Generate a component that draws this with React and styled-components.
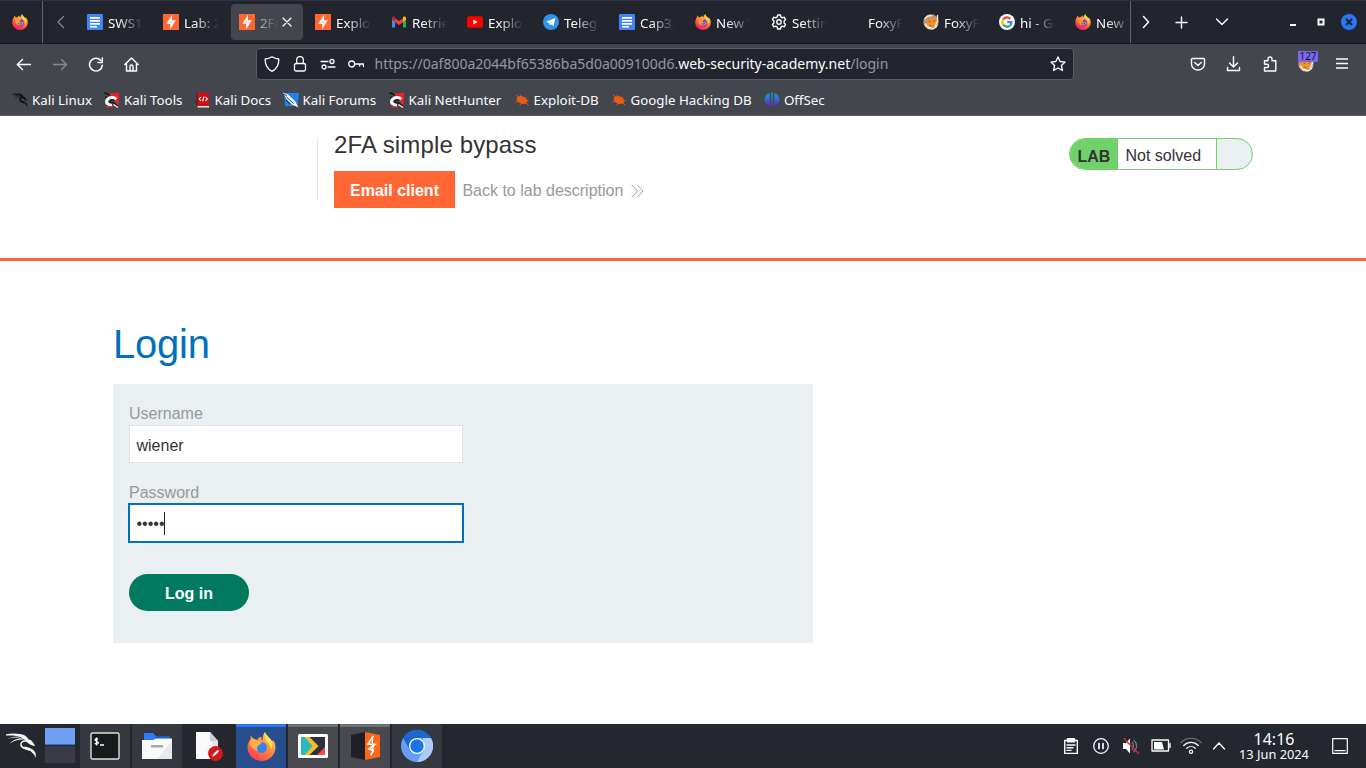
import React from "react";
import styled, { createGlobalStyle } from "styled-components";

const UI = `"Noto Sans", "Open Sans", sans-serif`;
const PAGE = `"Liberation Sans", Arial, sans-serif`;

const Global = createGlobalStyle`
  * { box-sizing: border-box; }
  html, body { margin: 0; padding: 0; overflow: hidden; }
  svg { display: block; flex: none; }
`;

const Screen = styled.div`
  width: 1366px;
  height: 768px;
  display: flex;
  flex-direction: column;
  background: #fff;
  font-family: ${UI};
`;

/* ---------- Browser chrome ---------- */
const TabBar = styled.div`
  height: 44px;
  display: flex;
  background: #23252e;
  border-top: 1px solid #2e3045;
  border-bottom: 1px solid #17181f;
  color: #fcfcfc;
`;
const Pinned = styled.div`
  width: 43px;
  padding: 13px 0 0 12px;
  border-right: 1px solid #62646b;
`;
const ScrollLeft = styled.div`
  width: 34px;
  padding: 13px 0 0 14px;
`;
const Tabs = styled.div`
  width: 1054px;
  display: flex;
  overflow: hidden;
  border-right: 1px solid #62646b;
`;
const Tab = styled.div`
  flex: none;
  width: 72px;
  height: 36px;
  margin: 3px 2px 0;
  padding: 0 8px;
  display: flex;
  align-items: center;
  border-radius: 4px;
  background: ${(p) => (p.$active ? "#44464e" : "transparent")};
`;
const Favicon = styled.div`
  width: 16px;
  height: 16px;
  flex: none;
  margin-right: 5px;
`;
const TabTitle = styled.div`
  width: ${(p) => (p.$short ? 19 : 35)}px;
  flex: none;
  overflow: hidden;
  white-space: nowrap;
  font-size: 13.33px;
  line-height: 20px;
  padding-top: 1px;
  mask-image: linear-gradient(to right, rgba(0, 0, 0, ${(p) => (p.$short ? 0.6 : 1)}) ${(p) => (p.$short ? 0 : 10)}px, transparent);
`;
const StripButtons = styled.div`
  display: flex;
  flex: 1;
  align-items: center;
  padding: 0 9px 0 9px;
`;
const StripButton = styled.div`
  width: ${(p) => p.$w}px;
  flex: none;
`;
const WindowButtons = styled.div`
  margin-left: auto;
  display: flex;
  gap: 12px;
`;
const NavBar = styled.div`
  height: 40px;
  display: flex;
  align-items: center;
  background: #44464e;
  padding: 0 16px;
`;
const NavButtons = styled.div`
  width: 240px;
  display: flex;
  gap: 20px;
`;
const UrlBar = styled.div`
  width: 818px;
  height: 32px;
  display: flex;
  align-items: center;
  background: #23252e;
  border: 1px solid #5b5d66;
  border-radius: 4px;
  padding: 0 7px;
`;
const UrlIcons = styled.div`
  display: flex;
  gap: 12px;
  margin-right: 10px;
`;
const Url = styled.div`
  flex: 1;
  font-size: 14px;
  line-height: 20px;
  padding-left: 0.5px;
  white-space: nowrap;
  color: #96979d;
  b { color: #fcfcfc; font-weight: 400; }
`;
const Extensions = styled.div`
  margin-left: auto;
  display: flex;
  gap: 20px;
`;
const ExtensionIcon = styled.div`
  position: relative;
  width: 16px;
  height: 16px;
`;
const Badge = styled.div`
  position: absolute;
  left: 0;
  top: -5px;
  width: 20px;
  height: 11px;
  border-radius: 1px;
  background: #7c66ef;
  color: #15141a;
  font-size: 10px;
  line-height: 11px;
  text-align: center;
`;
const Bookmarks = styled.div`
  height: 32px;
  display: flex;
  align-items: center;
  gap: 12px;
  padding-left: 12px;
  background: #44464e;
  border-bottom: 1px solid #5b5d66;
  color: #fcfcfc;
`;
const Bookmark = styled.div`
  display: flex;
  align-items: center;
  gap: 4px;
  width: ${(p) => p.$w}px;
  font-size: 13.33px;
  line-height: 18px;
  white-space: nowrap;
`;

/* ---------- Page ---------- */
const Page = styled.main`
  height: 608px;
  font-family: ${PAGE};
  color: #333332;
`;
const LabHeader = styled.header`
  height: 145px;
  border-bottom: 3px solid #ff6633;
  display: flex;
  justify-content: space-between;
  padding: 22px 113px 0 317px;
`;
const LabInfo = styled.div`
  height: 62px;
  border-left: 1px solid #e3e3e3;
  padding-left: 16px;
`;
const LabTitle = styled.h2`
  margin: -7px 0 12px;
  font-size: 24px;
  line-height: 28px;
  font-weight: 400;
  letter-spacing: 0.15px;
`;
const LabLinks = styled.div`
  display: flex;
  align-items: center;
  font-size: 16px;
`;
const EmailButton = styled.a`
  width: 121px;
  height: 37px;
  padding-top: 1px;
  background: #ff6633;
  color: #fff;
  font-weight: 700;
  line-height: 37px;
  text-align: center;
`;
const BackLink = styled.a`
  display: flex;
  align-items: center;
  gap: 8px;
  padding: 2px 0 0 7.4px;
  color: #999;
`;
const LabStatus = styled.div`
  width: 184px;
  height: 32px;
  display: flex;
  overflow: hidden;
  border: 1px solid #71d26c;
  border-radius: 16px;
  background: #eaeff2;
  font-size: 16px;
  line-height: 34px;
`;
const LabTag = styled.div`
  width: 48px;
  padding-left: 7.5px;
  line-height: 36px;
  background: #71d26c;
  font-weight: 700;
`;
const LabState = styled.div`
  width: 99px;
  padding-left: 7.5px;
  background: #fff;
  border-right: 1px solid #71d26c;
`;
const LoginSection = styled.section`
  padding: 60px 0 0 113px;
`;
const Heading = styled.h1`
  margin: 0 0 17px;
  font-size: 40px;
  line-height: 46px;
  font-weight: 400;
  letter-spacing: -0.25px;
  color: #0071bd;
`;
const LoginForm = styled.form`
  width: 700px;
  height: 259px;
  padding: 20px 16px 0;
  background: #eaeff2;
  font-size: 16px;
`;
const Label = styled.label`
  display: block;
  height: 21px;
  line-height: 20px;
  color: #999;
`;
const Field = styled.div`
  width: 334px;
  height: 38px;
  margin-bottom: ${(p) => p.$gap}px;
  display: flex;
  align-items: center;
  padding: ${(p) => (p.$focus ? 2 : 4)}px 0 0 6.5px;
  background: #fff;
  border: 1px solid ${(p) => (p.$focus ? "#0071bd" : "#e3e3e3")};
  box-shadow: ${(p) => (p.$focus ? "0 0 0 1px #0071bd" : "none")};
`;
const Caret = styled.span`
  width: 1px;
  height: 23px;
  margin: -1px 0 0 -0.8px;
  background: #222;
`;
const LoginButton = styled.button`
  display: block;
  width: 120px;
  height: 37px;
  border: 0;
  border-radius: 19px;
  padding: 2px 0 0;
  background: #00795f;
  color: #fff;
  font: 700 16px ${PAGE};
`;

/* ---------- Taskbar ---------- */
const Taskbar = styled.footer`
  height: 44px;
  display: flex;
  background: #25272f;
  color: #fcfcfc;
`;
const Launcher = styled.div`
  width: 45px;
  padding: 7px 0 0 5px;
`;
const Pager = styled.div`
  width: 30px;
  margin-right: 5px;
  padding-top: 4px;
  display: flex;
  flex-direction: column;
  gap: 1px;
`;
const Desktop = styled.div`
  height: 17px;
  background: ${(p) => (p.$current ? "#6e9ff2" : "#393b44")};
  border-bottom: ${(p) => (p.$current ? "1px solid #2f6fd8" : "0")};
`;
const Tasks = styled.div`
  display: flex;
  gap: 2px;
`;
const tones = { idle: "#36383f", none: "transparent", open: "#47494f", focused: "#284d8d" };
const edges = { idle: "transparent", none: "transparent", open: "#6b7173", focused: "#2a78f2" };
const Task = styled.div`
  width: 50px;
  height: 44px;
  display: flex;
  align-items: center;
  justify-content: center;
  background: ${(p) => tones[p.$tone]};
  box-shadow: inset 0 3px 0 ${(p) => edges[p.$tone]};
`;
const Tray = styled.div`
  margin-left: auto;
  display: flex;
  align-items: center;
`;
const TrayItem = styled.div`
  width: 30px;
  display: flex;
  justify-content: center;
`;
const Clock = styled.div`
  width: 78px;
  padding-right: 2px;
  display: flex;
  flex-direction: column;
  align-items: center;
  white-space: nowrap;
`;
const Time = styled.div`
  font-size: 16px;
  line-height: 16px;
`;
const DateText = styled.div`
  font-size: 12.8px;
  line-height: 14px;
`;
const ShowDesktop = styled.div`
  width: 52px;
  padding-left: 18px;
`;

/* ---------- Icons ---------- */
const Line = ({ size = 16, w = size, h = size, vb = "0 0 16 16", sw = 1.3, color = "#fcfcfc", children }) => (
  <svg width={w} height={h} viewBox={vb} fill="none" stroke={color} strokeWidth={sw} strokeLinecap="round" strokeLinejoin="round">
    {children}
  </svg>
);

const Firefox = ({ size = 16, id }) => (
  <svg width={size} height={size} viewBox="0 0 32 32">
    <defs>
      <linearGradient id={`ff${id}`} x1="0.8" y1="0" x2="0.3" y2="1">
        <stop offset="0" stopColor="#fff044" />
        <stop offset="0.35" stopColor="#ffa02d" />
        <stop offset="0.7" stopColor="#ff4f3d" />
        <stop offset="1" stopColor="#ee1470" />
      </linearGradient>
    </defs>
    <path fill={`url(#ff${id})`} d="M21 0c0 4 3 5 5 8l2-1c2 3 3.500 6 3.500 10C31.500 25.500 24.500 32 16 32S.5 25.500.5 17C.5 12 2 9 4 6l1-3 3 4 4-1c1.500-2 2-3 3-3 0 2 1 3 2 4 0-3 2-6 4-7z" />
    <circle cx="16.500" cy="17.500" r="7.500" fill="#6b45df" />
    <path fill="#ff9930" d="M4 9c4-2 7-1 9 1 2-1 5 0 6 2-2 0-4 1-4 3 2 3 6 2 7 0 2 3-1 8-6 8-6 0-9-3-9-7 0-3-1-5-3-7z" />
    <path fill="#6b45df" d="M12 17c3 3 7 2 9-1 0 4-3 6-6 5-2-.5-3-2-3-4z" />
    <path fill="#ffd33b" d="M22 4c5 4 7 10 5 16-1-5-3-8-6-10-1-3 0-5 1-6z" />
  </svg>
);

const TaskFirefox = () => (
  <svg width="29" height="29" viewBox="0 0 29 29">
    <defs>
      <linearGradient id="fft" x1="0.85" y1="0.05" x2="0.2" y2="1">
        <stop offset="0" stopColor="#ffd94a" />
        <stop offset="0.45" stopColor="#ff8a3c" />
        <stop offset="1" stopColor="#ff3850" />
      </linearGradient>
    </defs>
    <path fill="url(#fft)" d="M18 0c1 4 6 6 7 10l1-2c2 3 2.500 5 2.500 7.500C28.500 23 22 29 14.500 29S.5 23 .5 15.500c0-4 1-6 3-8l0-4 4 4 3 .2c1-2 2-3 4-3-.3 2 0 3 1 4 0-4 1-7 2.500-8.700z" />
    <circle cx="14.500" cy="15.500" r="5.500" fill="#3980ef" />
    <path fill="#ffad45" d="M3.500 7.500c2-1 5-1 7 1l4 2c0 2-3 2-4 4-1 1-1 3 1 5-4-1-6-5-8-5-1-2-.7-5 0-7z" />
    <path fill="#ffe25b" d="M18 0c1 4 6 6 7 10 1 3 0 6-1 8 0-5-3-7-5-10-1-3-2-5-1-8z" />
  </svg>
);

const Docs = () => (
  <svg width="16" height="16" viewBox="0 0 16 16">
    <rect width="16" height="16" rx="1" fill="#4285f4" />
    <path d="M3 3h10v1.700H3zM3 6h10v1.700H3zM3 9h10v1.700H3zM3 12h7v1.500H3z" fill="#fff" />
  </svg>
);
const Burp = () => (
  <svg width="16" height="16" viewBox="0 0 16 16">
    <rect width="16" height="16" fill="#ff6633" />
    <path d="M9 .8v5.400h3.800L7.200 15.200V9.800H3.200z" fill="#fff" />
    <path d="M6 7.300l2.500 0M7.700 8.800h2.500" stroke="#ff6633" strokeWidth=".5" fill="none" />
  </svg>
);
const Gmail = () => (
  <svg width="16" height="16" viewBox="0 0 16 16">
    <path d="M1 3.500v10h3V7z" fill="#4285f4" />
    <path d="M15 3.500v10h-3V7z" fill="#34a853" />
    <path d="M4 4.200v4L8 11l4-2.800v-4L8 7z" fill="#ea4335" />
    <path d="M1 5.500V4c0-1.500 1.600-2 2.500-1.200L4 3.200v4.500z" fill="#c5221f" />
    <path d="M15 5.500V4c0-1.500-1.600-2-2.500-1.200l-.5.400v4.500z" fill="#fbbc04" />
  </svg>
);
const YouTube = () => (
  <svg width="16" height="16" viewBox="0 0 16 16">
    <rect y="2.300" width="16" height="11.400" rx="2.500" fill="#f00" />
    <path d="m6.300 5.500 4.300 2.500-4.300 2.500z" fill="#fff" />
  </svg>
);
const Telegram = () => (
  <svg width="16" height="16" viewBox="0 0 16 16">
    <circle cx="8" cy="8" r="8" fill="#2f93e8" />
    <path d="M3 7.800 12.300 4l-1.600 8.200-2.600-1.900-1.300 1.300-.4-2.400z" fill="#fff" />
    <path d="m6.400 9.200 4-3.400-3.300 4z" fill="#a9d3f5" />
  </svg>
);
const Gear = () => (
  <Line sw={1.400}>
    <path d="m6.700 1-.5 2-1.400.8-2-.6L1.400 5.600 2.900 7v2l-1.500 1.400 1.400 2.400 2-.6 1.400.8.5 2h2.700l.5-2 1.300-.8 2 .6 1.400-2.400L13.100 9V7l1.500-1.400-1.400-2.400-2 .6L9.900 3l-.5-2z" />
    <circle cx="8" cy="8" r="2.200" />
  </Line>
);
const Fox = () => (
  <svg width="16" height="16" viewBox="0 0 16 16">
    <circle cx="8" cy="8" r="7.700" fill="#c09573" />
    <path d="M1 9c1 6 11 8 14 0l-1 4-4 2.500-5-.8z" fill="#fff3e6" />
    <path d="M4 5.500 9 5l3.500-2 1.200 4-2 4.500-4 1.200L3.500 11z" fill="#f59324" />
    <path d="m1.500 5 3.500-3 4-.3M14.500 1v6l-2.500 5.500M2.500 9.500l2 3.500 4 1" stroke="#efede9" strokeWidth="1.300" fill="none" />
    <path d="m5.500 7 2 .8M10 7.800 12 6M6.500 11.200l2 .3" stroke="#8a4a17" strokeWidth=".8" />
  </svg>
);
const Google = () => (
  <svg width="16" height="16" viewBox="0 0 16 16">
    <circle cx="8" cy="8" r="8" fill="#fff" />
    <g fill="none" strokeWidth="2.200">
      <path d="M4.200 5.500A4.500 4.500 0 0 1 11.300 4.900" stroke="#ea4335" />
      <path d="M4.200 5.500a4.500 4.500 0 0 0 0 5" stroke="#fbbc05" />
      <path d="M4.200 10.500a4.500 4.500 0 0 0 6.800 1" stroke="#34a853" />
      <path d="M11 11.500A4.500 4.500 0 0 0 12.500 8.200H8.200" stroke="#4285f4" />
    </g>
  </svg>
);

const Dragon = ({ size = 16, h = size, color = "#111216", bold = 1.5 }) => (
  <svg width={size} height={h} viewBox="0 0 32 28" preserveAspectRatio="none">
    <path fill={color} d="M1 3.200c5-1 10-1 15.500 0C20 4 22.500 6 23.500 8.200l3 1.300 3.500 4.800-1 .8-4-1.600-3.500-2.500C19 6.500 12 3.700 1 4.600z" />
    <path fill={color} d="M4.500 12.800c3.500-4 8-5.500 13-5.600l1.500 1.300C13 8.500 9 9.500 4.500 12.800z" />
    <path fill={color} d="M2.500 8c3-2 7-2.500 12-2.300v.9C10 6.500 6 6.700 2.500 8z" />
    <path fill="none" stroke={color} strokeWidth={bold} d="M21.500 10c-4-.5-6 1.500-5.500 4 .6 3.500 5 3.500 8.500 5" />
    <path fill={color} d="M19 15.500c5 .5 9.500 2.500 11.500 6.500l.5 5-2-3.500-3.500-3.500-5-1.700z" />
  </svg>
);
const Tools = () => (
  <svg width="16" height="16" viewBox="0 0 16 16">
    <path d="M4.500 1.500 15.500.8 14.500 14z" fill="#e8222d" />
    <path d="m0 1 3 .3L6 3.500M1 5l3 .5" stroke="#111" strokeWidth="1.200" />
    <path d="M12.300 7.200C10 4.800 5 4.800 3 8c-1.300 3 1 5.500 5 5" fill="none" stroke="#fff" strokeWidth="3" />
    <path d="M10.500 8.500C8 7 5.800 8 6 9.600c.2 1.300 2 1.600 3.800 1.200L14 14.500" fill="none" stroke="#111" strokeWidth="1.200" />
    <path d="M2.500 13.500c2 2 5 2 6.500.5" fill="none" stroke="#e8222d" strokeWidth="1.200" />
    <path d="M9.500 12.500 14 15.500" stroke="#f4f4f4" strokeWidth="1.300" />
  </svg>
);
const KaliDocs = () => (
  <svg width="16" height="16" viewBox="0 0 16 16">
    <path d="M2.500.5H14v15H2.500z" fill="#c91218" />
    <path d="M2 1v14" stroke="#740b0e" strokeWidth="1.200" />
    <path d="M2.500 14H14v1.500H2.500z" fill="#f5eaea" />
    <path d="m6 5-1.800 2L6 9m4.500-4 1.800 2-1.800 2M9 4.500 7.600 9.300" stroke="#fff" strokeWidth="1.100" fill="none" />
  </svg>
);
const Forums = () => (
  <svg width="16" height="16" viewBox="0 0 16 16">
    <path d="M1 1h15l-1.500 13H2z" fill="#1f80f2" />
    <path d="m0 .5 5 2L12 9l3.500 6.500L9 12.500 3.500 7z" fill="#f5f8fb" />
    <path d="m3.500 5 7 6.500M3 8l3.500 4M1 2l3 2" stroke="#20262e" strokeWidth=".9" />
  </svg>
);
const Exploit = () => (
  <svg width="16" height="16" viewBox="0 0 16 16">
    <ellipse cx="8" cy="8" rx="5.600" ry="3.600" transform="rotate(22 8 8)" fill="#e85d12" />
    <path d="m2 3 4 3M6 2.500l2 3M1.500 10.500l4-2M5.500 13l3-2.500M14.500 13.500l-3-3M14.500 8.500h-3M12 5l-1.500 2" stroke="#e85d12" strokeWidth=".9" />
  </svg>
);
const OffSec = () => (
  <svg width="16" height="16" viewBox="0 0 16 16">
    <defs>
      <linearGradient id="offsec" x1="0" y1="0" x2="0" y2="1">
        <stop offset="0" stopColor="#10a5c9" />
        <stop offset="1" stopColor="#6420cc" />
      </linearGradient>
    </defs>
    <path fill="url(#offsec)" d="M5.700 1v13C2.500 13 .6 10.500.6 7.500S2.500 2 5.700 1zM10.300 1v13c3.200-1 5.100-3.500 5.100-6.500S13.500 2 10.300 1zM7.200.5h1.600v15.200H7.200z" />
  </svg>
);

const Terminal = () => (
  <svg width="30" height="28" viewBox="0 0 30 28">
    <rect x="1" y="1" width="28" height="26" rx="1.500" fill="#18191b" stroke="#dededc" strokeWidth="1.400" />
    <path d="M8 7.200c-1-1-3-.7-3 .7 0 1.600 3.300 1.100 3.300 2.800 0 1.600-2.300 1.600-3.500.6M6.600 5.500v8M10 13h4" stroke="#fff" strokeWidth="1.300" fill="none" />
  </svg>
);
const Files = () => (
  <svg width="32" height="28" viewBox="0 0 32 28">
    <path d="M3 1h9l3 3h14v6H3z" fill="#2f7bf3" />
    <path d="M15 4h14v3H14z" fill="#1d5cc4" />
    <path d="M1 8h11l3-1.500h16V27H1z" fill="#f9f9f9" />
    <path d="M31 9v18H16z" fill="#e9e9ea" />
    <path d="M10 15.500V14a1 1 0 0 1 1-1h10a1 1 0 0 1 1 1v1.500z" fill="#a9a9ab" />
  </svg>
);
const Editor = () => (
  <svg width="28" height="30" viewBox="0 0 28 30">
    <path d="M1 1h14l8 9v18H1z" fill="#fafafa" />
    <path d="M15 1v9h8z" fill="#cfcfd1" />
    <path d="m15 10 8 8v-8z" fill="#e4e4e6" />
    <circle cx="20.500" cy="22.500" r="7.400" fill="#d31818" />
    <path d="m17.300 25.700.6-2.200 4.800-4.800 1.500 1.500-4.800 4.800z" fill="#fff" />
  </svg>
);
const Player = () => (
  <svg width="30" height="24" viewBox="0 0 30 24">
    <rect width="30" height="24" rx="1.500" fill="#fff" />
    <path d="M3 3h24v18H3z" fill="#2d3142" />
    <path d="M3 3h5l7 9-7 9H3z" fill="#27b9bd" />
    <path d="M6.500 3h5l9 9-9 9h-5l8-9z" fill="#f5bd28" />
    <path d="M27 13v8h-8z" fill="#f8484c" />
  </svg>
);
const BurpCube = () => (
  <svg width="29" height="28" viewBox="0 0 29 28">
    <path d="m0 3 14-3v28L0 25z" fill="#1e2026" />
    <path d="m14 0 15 3v22l-15 3z" fill="#fc6719" />
    <path d="m22.500 4-5.500 8 7 .5-6 4.500 4.500 1.500-3 5" fill="none" stroke="#fff" strokeWidth="1.600" />
    <path d="m21 5.500.5 6M23 13l-2 6" stroke="#fff" strokeWidth="1.200" />
  </svg>
);
const Chromium = () => (
  <svg width="32" height="32" viewBox="0 0 32 32">
    <circle cx="16" cy="16" r="16" fill="#669df6" />
    <path d="M2.100 8A16 16 0 0 1 29.900 8H16L9.100 20z" fill="#1a66d2" />
    <path d="M29.900 8A16 16 0 0 1 16 32l7-12-1-12z" fill="#aecbfa" />
    <circle cx="16" cy="16" r="8" fill="#fff" />
    <circle cx="16" cy="16" r="6.700" fill="#1b73e8" />
  </svg>
);

const tabs = [
  [Docs, "SWS101"], [Burp, "Lab: 2FA"], [Burp, "2FA simple", true], [Burp, "Exploit"],
  [Gmail, "Retrieve"], [YouTube, "Exploit"], [Telegram, "Telegram"], [Docs, "Cap3_"],
  [Firefox, "New Tab"], [Gear, "Settings"], [null, "FoxyProxy"], [Fox, "FoxyProxy"],
  [Google, "hi - Google"], [Firefox, "New Tab"],
];
const bookmarks = [
  [Dragon, "Kali Linux", 80], [Tools, "Kali Tools", 78.5], [KaliDocs, "Kali Docs", 76],
  [Forums, "Kali Forums", 94], [Tools, "Kali NetHunter", 113], [Exploit, "Exploit-DB", 85],
  [Exploit, "Google Hacking DB", 141.4], [OffSec, "OffSec", 62],
];
const tasks = [
  [Terminal, "idle"], [Files, "idle"], [Editor, "none"], [TaskFirefox, "focused"],
  [Player, "open"], [BurpCube, "open"], [Chromium, "idle"],
];

export default function App() {
  return (
    <Screen>
      <Global />
      <TabBar>
        <Pinned><Firefox id="pin" /></Pinned>
        <ScrollLeft><Line color="#85868b"><path d="m6.500 2.500-5.500 5.500 5.500 5.500" /></Line></ScrollLeft>
        <Tabs>
          {tabs.map(([Icon, title, active], i) => (
            <Tab key={i} $active={active}>
              <Favicon>{Icon && <Icon id={i} />}</Favicon>
              <TabTitle $short={active}>{title}</TabTitle>
              {active && <Line sw={1.200}><path d="m4 4 8 8m0-8-8 8" /></Line>}
            </Tab>
          ))}
        </Tabs>
        <StripButtons>
          <StripButton $w={34}><Line sw={1.500}><path d="m3.500 2.500 5 5.500-5 5.500" /></Line></StripButton>
          <StripButton $w={40}><Line sw={1.400}><path d="M7.500 3v11M2 8.500h11" /></Line></StripButton>
          <StripButton $w={30}><Line sw={1.400}><path d="m2.500 5 5.500 5.500L13.500 5" /></Line></StripButton>
          <WindowButtons>
            <Line sw={2}><path d="M5 11h6" strokeLinecap="butt" /></Line>
            <Line sw={2}><path d="M5.500 5.500h5v5h-5z" strokeLinejoin="miter" /></Line>
            <svg width="16" height="16" viewBox="0 0 16 16">
              <circle cx="8" cy="8" r="8" fill="#2a78f7" />
              <path d="m5 5 6 6m0-6-6 6" stroke="#182033" strokeWidth="1.900" />
            </svg>
          </WindowButtons>
        </StripButtons>
      </TabBar>

      <NavBar>
        <NavButtons>
          <Line sw={1.400}><path d="M14.500 8.500H1.500M6.500 3.500l-5.200 5 5.200 5" /></Line>
          <Line color="#898a90"><path d="M1.500 8.500h12.800M9.500 3.500l5.200 5-5.200 5" /></Line>
          <Line sw={1.500}><path d="M14.300 9.300A6.400 6.400 0 1 1 12.700 4.300M14.300 2v4.500H9.800" /></Line>
          <Line sw={1.400}><path d="M.8 8.500 7.500 2l6.700 6.500M2.500 7v8h10V7M6 15v-4.500a1.500 1.500 0 0 1 3 0V15" /></Line>
        </NavButtons>
        <UrlBar>
          <UrlIcons>
            <Line><path d="M8 .8c2 1.500 4.200 2 6.800 2.200C15 8.500 12.500 13 8 15.300 3.500 13 1 8.500 1.200 3 3.800 2.800 6 2.300 8 .8z" /></Line>
            <Line><rect x="2.500" y="7.500" width="11" height="7.500" rx="1.500" /><path d="M4.700 7.500V4a3.300 3.300 0 0 1 6.600 0v3.500" /></Line>
            <Line><path d="M1 5.500h7M8 11h7" /><circle cx="12" cy="5.500" r="2" /><circle cx="4" cy="11" r="2" /></Line>
            <Line><circle cx="3.700" cy="8" r="3" /><path d="M6.700 8H15.500v2.500M11.700 8v2" /></Line>
          </UrlIcons>
          <Url>https://0af800a2044bf65386ba5d0a009100d6.<b>web-security-academy.net</b>/login</Url>
          <Line><path d="m8 .9 2.100 4.600 5 .6-3.700 3.400 1 5L8 12l-4.400 2.500 1-5L.9 6.100l5-.6z" /></Line>
        </UrlBar>
        <Extensions>
          <Line sw={1.400}><path d="M2.500 2.500h11a1 1 0 0 1 1 1V8a6.500 6 0 0 1-13 0V3.500a1 1 0 0 1 1-1z" /><path d="M4.800 6.500 8 9.500l3.200-3" /></Line>
          <Line sw={1.400}><path d="M7.500.8v10M3.500 7l4 4 4-4M1.500 11.500v3h12v-3" /></Line>
          <Line sw={1.400}><path d="M2.500 15V11.500H5a1.600 1.600 0 0 0 0-3.200H2.500V4.700H6V3a2 2 0 0 1 4 0v1.700h3.800V15z" /></Line>
          <ExtensionIcon><Fox /><Badge>127</Badge></ExtensionIcon>
          <Line sw={1.400}><path d="M2 3h12M2 7.500h12M2 12h12" strokeLinecap="butt" /></Line>
        </Extensions>
      </NavBar>

      <Bookmarks>
        {bookmarks.map(([Icon, title, w]) => (
          <Bookmark key={title} $w={w}><Icon {...(Icon === Dragon ? { bold: 3 } : {})} />{title}</Bookmark>
        ))}
      </Bookmarks>

      <Page>
        <LabHeader>
          <LabInfo>
            <LabTitle>2FA simple bypass</LabTitle>
            <LabLinks>
              <EmailButton>Email client</EmailButton>
              <BackLink>
                Back to lab description
                <Line w={13} h={14} vb="0 0 13 14" sw={0.9} color="#999"><path d="m1 1 5.500 6L1 13M6.500 1 12 7l-5.500 6" /></Line>
              </BackLink>
            </LabLinks>
          </LabInfo>
          <LabStatus><LabTag>LAB</LabTag><LabState>Not solved</LabState></LabStatus>
        </LabHeader>
        <LoginSection>
          <Heading>Login</Heading>
          <LoginForm>
            <Label>Username</Label>
            <Field $gap={20}>wiener</Field>
            <Label>Password</Label>
            <Field $gap={32} $focus><span>•••••</span><Caret /></Field>
            <LoginButton type="button">Log in</LoginButton>
          </LoginForm>
        </LoginSection>
      </Page>

      <Taskbar>
        <Launcher><Dragon size={32} h={28} color="#f4f4f4" /></Launcher>
        <Pager><Desktop $current /><Desktop /></Pager>
        <Tasks>
          {tasks.map(([Icon, tone], i) => <Task key={i} $tone={tone}><Icon /></Task>)}
        </Tasks>
        <Tray>
          <TrayItem><Line sw={1.400}><path d="M1.700 2.500h12.600v13H1.700z" /><path d="M4.500.8h7v3h-7z" fill="#fcfcfc" /><path d="M4 7h8M4 9.700h6M4 12.400h4" /></Line></TrayItem>
          <TrayItem><Line><circle cx="8" cy="8" r="7.300" /><path d="M6 5.500v5M10 5.500v5" strokeWidth="1.700" /></Line></TrayItem>
          <TrayItem>
            <Line>
              <path d="M0 5h3l4-4.500v15L3 11H0z" fill="#fcfcfc" stroke="none" />
              <path d="M9 4.500c2 2 2 5 0 7M11 2.500c3.500 3 3.500 8 0 11" stroke="#77787d" />
              <path d="m1 .5 14.500 15" stroke="#da2c36" />
            </Line>
          </TrayItem>
          <TrayItem><Line w={20} h={14} vb="0 0 20 14"><path d="M1 1h16.500v11H1zM19 4.500v4" /><path d="M3 3h8l2 7.500H3z" fill="#fcfcfc" stroke="none" /></Line></TrayItem>
          <TrayItem><Line w={22} h={18} vb="0 0 22 18" sw={1.200}><path d="M1 5.500C7-.2 15-.2 21 5.500" stroke="#77787d" /><path d="M3.700 8.500C8 4.300 14 4.300 18.300 8.500M6.700 11.300c2.500-2.400 6.100-2.400 8.600 0" /><circle cx="11" cy="14.800" r="1.600" /></Line></TrayItem>
          <TrayItem><Line><path d="M.5 11 6 5l5.500 6" /></Line></TrayItem>
          <Clock><Time>14:16</Time><DateText>13 Jun 2024</DateText></Clock>
          <ShowDesktop><Line sw={1.200}><path d="M.7.700h14.600v14.600H.7zM3 12.700h10" /></Line></ShowDesktop>
        </Tray>
      </Taskbar>
    </Screen>
  );
}
